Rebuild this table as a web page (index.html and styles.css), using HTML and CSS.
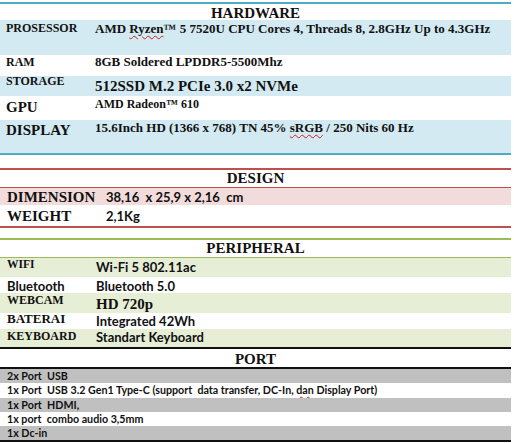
FILE: index.html
```html
<!DOCTYPE html>
<html lang="id">
<head>
<meta charset="utf-8">
<title>Spesifikasi</title>
<link rel="stylesheet" href="styles.css">
</head>
<body>
<div class="sheet">
  <section class="spec hw">
    <div class="title">HARDWARE</div>
    <div class="row shade h-proc"><div class="k s12">PROSESSOR</div><div class="v s13">AMD <span class="typo">Ryzen</span>™ 5 7520U CPU Cores 4, Threads 8, 2.8GHz Up to 4.3GHz</div></div>
    <div class="row h-ram"><div class="k s12">RAM</div><div class="v s13">8GB Soldered LPDDR5-5500Mhz</div></div>
    <div class="row shade h-sto"><div class="k s12">STORAGE</div><div class="v s15">512SSD M.2 PCIe 3.0 x2 NVMe</div></div>
    <div class="row h-gpu"><div class="k s15">GPU</div><div class="v s12">AMD Radeon™ 610</div></div>
    <div class="row shade h-dis"><div class="k s15">DISPLAY</div><div class="v s13">15.6Inch HD (1366 x 768) TN 45% <span class="typo">sRGB</span> / 250 Nits 60 Hz</div></div>
  </section>

  <section class="spec ds">
    <div class="title">DESIGN</div>
    <div class="row shade d-dim"><div class="k s15">DIMENSION</div><div class="v sans">38,16&nbsp; x 25,9 x 2,16&nbsp; cm</div></div>
    <div class="row d-wei"><div class="k s15">WEIGHT</div><div class="v sans">2,1Kg</div></div>
  </section>

  <section class="spec pr">
    <div class="title">PERIPHERAL</div>
    <div class="row shade p-wifi"><div class="k s11">WIFI</div><div class="v sans">Wi-Fi 5 802.11ac</div></div>
    <div class="row p-bt"><div class="k sans">Bluetooth</div><div class="v sans">Bluetooth 5.0</div></div>
    <div class="row shade p-cam"><div class="k s12">WEBCAM</div><div class="v s15">HD 720p</div></div>
    <div class="row p-bat"><div class="k s13">BATERAI</div><div class="v sans">Integrated 42Wh</div></div>
    <div class="row shade p-key"><div class="k s12">KEYBOARD</div><div class="v sans">Standart Keyboard</div></div>
  </section>

  <section class="spec pt">
    <div class="title">PORT</div>
    <div class="line shade">2x Port&nbsp; USB</div>
    <div class="line tall">1x Port&nbsp; USB 3.2 Gen1 Type-C (support&nbsp; data transfer, DC-In, <span class="typo">dan</span> Display Port)</div>
    <div class="line shade">1x Port&nbsp; HDMI,</div>
    <div class="line">1x port&nbsp; combo audio 3,5mm</div>
    <div class="line shade">1x Dc-in</div>
  </section>
</div>
</body>
</html>
```

FILE: styles.css
```css
* { box-sizing: border-box; }
html, body { margin: 0; padding: 0; background: #fff; }
body { font-family: "Liberation Serif", "Times New Roman", serif; color: #111; }

.sheet { width: 511px; padding-top: 2px; }

.spec { display: flex; flex-direction: column; }

.title {
  text-align: center;
  font-weight: bold;
  font-size: 15px;
  line-height: 17px;
  height: 18px;
}

.row {
  display: grid;
  align-items: start;
  font-weight: bold;
}
.k { padding-left: 6px; white-space: nowrap; }
.v { white-space: nowrap; }

.s11 { font-size: 11.5px; }
.s12 { font-size: 12px; }
.s13 { font-size: 13px; }
.s15 { font-size: 15px; }
.sans { font-family: Lato, "Open Sans", sans-serif; font-size: 13px; font-weight: bold; }

.typo {
  text-decoration: underline wavy #d42020;
  text-decoration-thickness: 1px;
  text-underline-offset: 2px;
}

/* HARDWARE */
.hw { border-top: 2px solid #4bacc6; border-bottom: 2px solid #4bacc6; }
.hw .title { height: 16px; line-height: 18px; }
.hw .row { grid-template-columns: 95px 1fr; }
.hw .shade { background: #d3eaf2; }
.h-proc { height: 35px; line-height: 17px; }
.h-ram { height: 21px; line-height: 14px; }
.h-sto { height: 20px; }
.h-sto .k { line-height: 11px; }
.h-sto .v { line-height: 20px; }
.h-gpu { height: 24px; }
.h-gpu .k { line-height: 22px; }
.h-gpu .v { line-height: 17px; }
.h-dis { height: 33px; }
.h-dis .k { line-height: 20px; }
.h-dis .v { line-height: 16px; }

/* DESIGN */
.ds { margin-top: 13px; border-top: 2px solid #c0504d; border-bottom: 2px solid #c0504d; }
.ds .title { border-bottom: 1px solid #c0504d; }
.ds .row { grid-template-columns: 106px 1fr; }
.ds .k { padding-left: 7px; }
.ds .shade { background: #f2dbdb; }
.d-dim { height: 17px; line-height: 19px; }
.d-wei { height: 21px; line-height: 22px; }

/* PERIPHERAL */
.pr { margin-top: 10px; border-top: 2px solid #9bbb59; }
.pr .title { border-bottom: 1px solid #9bbb59; }
.pr .row { grid-template-columns: 96px 1fr; }
.pr .k { padding-left: 7px; }
.pr .shade { background: #e6eed6; }
.p-wifi { height: 19px; }
.p-wifi .k { line-height: 12px; }
.p-wifi .v { line-height: 18px; }
.p-bt { height: 16px; line-height: 19px; }
.p-cam { height: 20px; }
.p-cam .k { line-height: 14px; }
.p-cam .v { line-height: 22px; }
.p-bat { height: 16px; }
.p-bat .k { line-height: 12px; }
.p-bat .v { line-height: 16px; }
.p-key { height: 18px; }
.p-key .k { line-height: 14px; }
.p-key .v { line-height: 16px; }

/* PORT */
.pt { border-top: 2px solid #111; border-bottom: 2px solid #111; }
.pt .title { height: 20px; line-height: 21px; border-bottom: 2px solid #111; }
.line {
  height: 14px;
  line-height: 14px;
  padding-left: 7px;
  font-family: Lato, "Open Sans", sans-serif;
  font-size: 10.7px;
  font-weight: bold;
  white-space: nowrap;
}
.line.tall { height: 15px; }
.pt .shade { background: #c0c0c0; }
```
